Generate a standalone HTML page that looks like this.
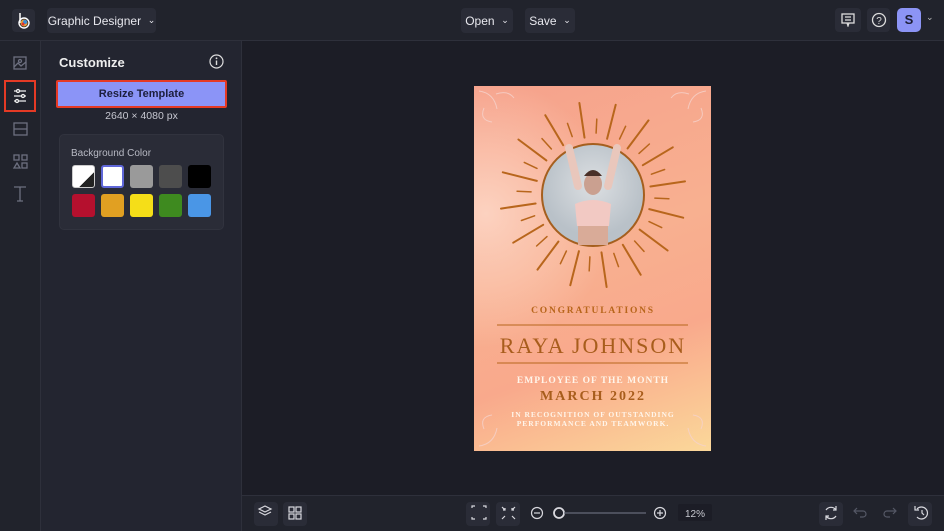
<!DOCTYPE html><html><head><style>
*{margin:0;padding:0;box-sizing:border-box}
body{width:944px;height:531px;background:#1c1d26;font-family:"Liberation Sans",sans-serif;position:relative;overflow:hidden;color:#e6e7ee}
.a{position:absolute}
.btn{background:#2a2c37;border-radius:4px;font-size:12px;color:#e8e8ee;display:flex;align-items:center;justify-content:center;white-space:nowrap}
.sw{position:absolute;width:23px;height:23px;border-radius:3px}
.ib{position:absolute;width:24px;height:24px;background:#2a2c37;border-radius:4px}
</style></head><body>
<div class="a" style="left:0;top:0;width:944px;height:41px;background:#21232c;border-bottom:1px solid #2e303b"></div>
<div class="a" style="left:12px;top:9px;width:23px;height:23px;background:#2a2c37;border-radius:4px"><svg width="23" height="23"><line x1="8" y1="4" x2="8" y2="14" stroke="#fff" stroke-width="1.5"/><circle cx="12" cy="14" r="5" fill="none" stroke="#fff" stroke-width="1.4"/><circle cx="12" cy="14" r="3.5" fill="#e6a03a"/><circle cx="13" cy="13" r="2" fill="#3a8fd6"/><circle cx="11" cy="15" r="1.5" fill="#d33"/></svg></div>
<div class="a btn" style="left:47px;top:8px;width:109px;height:25px">Graphic Designer&nbsp;&nbsp;<span style="font-size:9px">&#8964;</span></div>
<div class="a btn" style="left:461px;top:8px;width:52px;height:25px">Open&nbsp;&nbsp;<span style="font-size:9px">&#8964;</span></div>
<div class="a btn" style="left:525px;top:8px;width:50px;height:25px">Save&nbsp;&nbsp;<span style="font-size:9px">&#8964;</span></div>
<div class="a btn" style="left:835px;top:8px;width:26px;height:24px"><svg width="14" height="14"><rect x="1" y="1" width="12" height="9" fill="none" stroke="#ddd" stroke-width="1.3"/><path d="M4 4h6M4 7h6M6 10l1 3 1-3" stroke="#ddd" stroke-width="1.2" fill="none"/></svg></div>
<div class="a btn" style="left:867px;top:8px;width:23px;height:24px"><svg width="16" height="16"><circle cx="8" cy="8" r="6.5" fill="none" stroke="#ddd" stroke-width="1.3"/><text x="8" y="12" font-size="10" fill="#ddd" text-anchor="middle" font-family="Liberation Sans">?</text></svg></div>
<div class="a" style="left:897px;top:8px;width:24px;height:24px;background:#8c94f5;border-radius:5px;color:#1c1d33;font-weight:bold;font-size:13px;text-align:center;line-height:24px">S</div>
<div class="a" style="left:926px;top:12px;font-size:9px;color:#bbb">&#8964;</div>
<div class="a" style="left:0;top:41px;width:41px;height:490px;background:#21232c;border-right:1px solid #2e303b"></div>
<div class="a" style="left:41px;top:41px;width:201px;height:490px;background:#232530;border-right:1px solid #2e303b"></div>
<svg class="a" style="left:0;top:41px" width="41" height="170" fill="none" stroke="#6d7080" stroke-width="1.3">
<rect x="14" y="16" width="12" height="12"/><path d="M14 26l4-4 3 3 5-4"/><circle cx="20" cy="20" r="1.5"/>
<rect x="5" y="40" width="30" height="30" stroke="#e53a25" stroke-width="2"/>
<path d="M14 50h12M14 55h12M14 60h12" stroke="#eee"/><circle cx="18" cy="50" r="1.5" stroke="#eee" fill="#21232c"/><circle cx="23" cy="55" r="1.5" stroke="#eee" fill="#21232c"/><circle cx="17" cy="60" r="1.5" stroke="#eee" fill="#21232c"/>
<rect x="14" y="82" width="13" height="12"/><path d="M14 88h13"/>
<rect x="14" y="114" width="5" height="5"/><rect x="22" y="114" width="5" height="5"/><path d="M14 127l3-5 3 5z"/><rect x="22" y="122" width="5" height="5"/>
<path d="M14 146h12M20 146v14M17 160h6"/></svg>
<div class="a" style="left:59px;top:55px;font-size:13px;font-weight:bold;color:#eee">Customize</div>
<svg class="a" style="left:209px;top:54px" width="15" height="15"><circle cx="7.5" cy="7.5" r="6.5" fill="none" stroke="#ddd" stroke-width="1.2"/><path d="M7.5 6.5v4.5" stroke="#ddd" stroke-width="1.4"/><circle cx="7.5" cy="4.3" r="0.9" fill="#ddd"/></svg>
<div class="a" style="left:56px;top:80px;width:171px;height:28px;border:2px solid #e53a25;border-radius:2px;background:#8b94f7;color:#1c1e3c;font-size:11px;font-weight:bold;text-align:center;line-height:24px">Resize Template</div>
<div class="a" style="left:59px;top:110px;width:165px;text-align:center;font-size:10.5px;color:#c6c7d0">2640 × 4080 px</div>
<div class="a" style="left:59px;top:134px;width:165px;height:96px;background:#2a2c37;border-radius:5px;border:1px solid #31333e"></div>
<div class="a" style="left:71px;top:148px;font-size:10px;color:#b8bac4">Background Color</div>
<div class="sw" style="left:72px;top:165px;background:linear-gradient(135deg,#fff 65%,#222 65%);border:1px solid #ccc"></div>
<div class="sw" style="left:101px;top:165px;background:#fff;border:2px solid #5f67d8"></div>
<div class="sw" style="left:130px;top:165px;background:#9a9a9a"></div>
<div class="sw" style="left:159px;top:165px;background:#4d4d4d"></div>
<div class="sw" style="left:188px;top:165px;background:#000"></div>
<div class="sw" style="left:72px;top:194px;background:#b5102e"></div>
<div class="sw" style="left:101px;top:194px;background:#e1a022"></div>
<div class="sw" style="left:130px;top:194px;background:#f5de18"></div>
<div class="sw" style="left:159px;top:194px;background:#3e8a1f"></div>
<div class="sw" style="left:188px;top:194px;background:#4a96e6"></div>
<div class="a" style="left:474px;top:86px;width:237px;height:365px;background:radial-gradient(ellipse at 5% 35%,#fcd2c0 0%,rgba(252,210,192,0) 40%),linear-gradient(160deg,#f6a28c 0%,#f8b090 45%,#f9a98c 70%,#fbd89a 100%)"></div>
<svg class="a" style="left:474px;top:86px" width="237" height="365">
<g id="rays" stroke="#b8661c" stroke-linecap="round"></g>
<defs><radialGradient id="ph" cx="50%" cy="40%"><stop offset="0" stop-color="#dcdfe2"/><stop offset="1" stop-color="#b9c1c8"/></radialGradient></defs>
<circle cx="119" cy="109" r="51" fill="url(#ph)" stroke="#a55f1e" stroke-width="2"/>
<path d="M95 62l9 38 M143 62l-9 38" stroke="#e9c7bc" stroke-width="8" stroke-linecap="round"/>
<ellipse cx="119" cy="98" rx="9" ry="11" fill="#caa090"/><path d="M110 90q9-12 18 0" fill="#4a3028"/>
<path d="M101 118q18-8 36 0l-2 22h-32z" fill="#f2c9c3"/><path d="M104 140h30v19h-30z" fill="#d9ab98"/>
<line x1="23" y1="239" x2="214" y2="239" stroke="#b8661c" stroke-width="1"/>
<line x1="23" y1="277" x2="214" y2="277" stroke="#b8661c" stroke-width="1"/>
<g fill="none" stroke="#f5d2cc" stroke-width="1" opacity=".8"><path d="M5 5q15 2 18 18M10 22q-5 12 8 14M22 8q12-4 18 4"/><path d="M232 5q-15 2-18 18M227 22q5 12-8 14M215 8q-12-4-18 4"/><path d="M5 360q15-2 18-18M10 343q-5-12 8-14"/><path d="M232 360q-15-2-18-18M227 343q5-12-8-14"/></g>
<text x="119" y="227" text-anchor="middle" font-family="Liberation Serif" font-size="9.5" font-weight="bold" letter-spacing="1.8" fill="#b8661c">CONGRATULATIONS</text>
<text x="119" y="267" text-anchor="middle" font-family="Liberation Serif" font-size="22" letter-spacing="2" fill="#a85d1c">RAYA JOHNSON</text>
<text x="119" y="297" text-anchor="middle" font-family="Liberation Serif" font-size="9.5" font-weight="bold" letter-spacing="1" fill="#fff5ea">EMPLOYEE OF THE MONTH</text>
<text x="119" y="314" text-anchor="middle" font-family="Liberation Serif" font-size="14" font-weight="bold" letter-spacing="2" fill="#a85d1c">MARCH 2022</text>
<text x="119" y="331" text-anchor="middle" font-family="Liberation Serif" font-size="7.5" font-weight="bold" letter-spacing="1" fill="#fff5ea">IN RECOGNITION OF OUTSTANDING</text>
<text x="119" y="340" text-anchor="middle" font-family="Liberation Serif" font-size="7.5" font-weight="bold" letter-spacing="1" fill="#fff5ea">PERFORMANCE AND TEAMWORK.</text>
</svg>
<script>
var g=document.getElementById('rays'),s='';
for(var i=0;i<32;i++){var a=i*Math.PI*2/32+0.05,L=i%2,r0=L?58:62,l=L?93:76,w=L?2:1.5;
s+='<line x1="'+(119+r0*Math.cos(a)).toFixed(1)+'" y1="'+(109+r0*Math.sin(a)).toFixed(1)+'" x2="'+(119+l*Math.cos(a)).toFixed(1)+'" y2="'+(109+l*Math.sin(a)).toFixed(1)+'" stroke-width="'+w+'"/>';}
g.innerHTML=s;
</script>
<div class="a" style="left:242px;top:495px;width:702px;height:36px;background:#21232c;border-top:1px solid #2e303b"></div>
<div class="ib" style="left:254px;top:502px"></div><div class="ib" style="left:283px;top:502px"></div>
<div class="ib" style="left:466px;top:502px"></div><div class="ib" style="left:496px;top:502px"></div>
<div class="ib" style="left:819px;top:502px"></div><div class="ib" style="left:908px;top:502px"></div>
<svg class="a" style="left:242px;top:495px" width="702" height="36" fill="none" stroke="#d8d8de" stroke-width="1.2">
<path d="M23 11l6 3-6 3-6-3z M17 17l6 3 6-3"/>
<rect x="47" y="12" width="5" height="5"/><rect x="54" y="12" width="5" height="5"/><rect x="47" y="19" width="5" height="5"/><rect x="54" y="19" width="5" height="5"/>
<path d="M230 13v-2h3M241 11h3v2M244 22v2h-3M233 24h-3v-2"/>
<path d="M260 12l3 3M263 13v2h-2M273 12l-3 3M270 13v2h2M260 24l3-3M273 24l-3-3"/>
<circle cx="295" cy="18" r="5.5"/><path d="M292 18h6"/>
<circle cx="317" cy="18" r="5" stroke-width="1.8"/><path d="M322 18h82" stroke="#666a78"/>
<circle cx="418" cy="18" r="5.5"/><path d="M415 18h6M418 15v6"/>
<rect x="436" y="9" width="34" height="17" rx="2" fill="#1c1d26" stroke="none"/>
<text x="453" y="22" font-size="10" fill="#c8c9d0" stroke="none" text-anchor="middle" font-family="Liberation Sans">12%</text>
<path d="M584 15a6 6 0 0 1 10 0M594 21a6 6 0 0 1-10 0M594 11v4h-3M584 25v-4h3"/>
<path d="M613 16h8a3 3 0 0 1 0 6h-3M615 13l-3 3 3 3" stroke="#555866"/>
<path d="M653 16h-8a3 3 0 0 0 0 6h3M651 13l3 3-3 3" stroke="#555866"/>
<path d="M675 14a6 6 0 1 1 0 8M673 11v4h4M680 15v3l2 2"/>
</svg>
</body></html>
